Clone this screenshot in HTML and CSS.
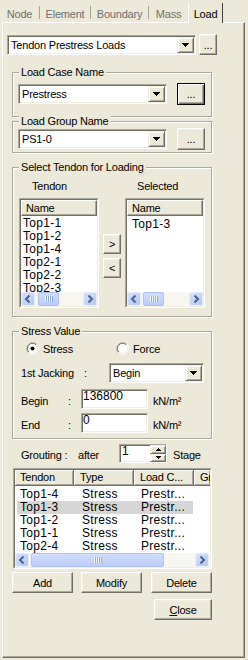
FILE: index.html
```html
<!DOCTYPE html>
<html>
<head>
<meta charset="utf-8">
<link rel="stylesheet" href="styles.css">
</head>
<body>
<div class="tabs">
  <span class="tab tab-node">Node</span><span class="tsep"></span>
  <span class="tab tab-elem">Element</span><span class="tsep"></span>
  <span class="tab tab-bnd">Boundary</span><span class="tsep"></span>
  <span class="tab tab-mass">Mass</span>
  <span class="tab tab-load">Load</span>
</div>
<div class="panel">
  <div class="row-type">
    <div class="combo combo-type"><span class="ctext">Tendon Prestress Loads</span><span class="drop"><svg width="7" height="4" viewBox="0 0 7 4"><path d="M0 0h7v1H0zM1 1h5v1H1zM2 2h3v1H2zM3 3h1v1H3z"/></svg></span></div>
    <button class="btn btn-dots-s">...</button>
  </div>

  <div class="group g-case">
    <div class="gtitle">Load Case Name</div>
    <div class="grow">
      <div class="combo combo-name"><span class="ctext">Prestress</span><span class="drop"><svg width="7" height="4" viewBox="0 0 7 4"><path d="M0 0h7v1H0zM1 1h5v1H1zM2 2h3v1H2zM3 3h1v1H3z"/></svg></span></div>
      <button class="btn btn-def btn-dots">...</button>
    </div>
  </div>

  <div class="group g-group">
    <div class="gtitle">Load Group Name</div>
    <div class="grow">
      <div class="combo combo-name"><span class="ctext">PS1-0</span><span class="drop"><svg width="7" height="4" viewBox="0 0 7 4"><path d="M0 0h7v1H0zM1 1h5v1H1zM2 2h3v1H2zM3 3h1v1H3z"/></svg></span></div>
      <button class="btn btn-dots">...</button>
    </div>
  </div>

  <div class="group g-tendon">
    <div class="gtitle">Select Tendon for Loading</div>
    <div class="lblrow"><span class="lbl-t">Tendon</span><span>Selected</span></div>
    <div class="lists">
      <div class="lb">
        <div class="lb-in">
          <div class="lh">Name</div>
          <div class="litems">
            <div>Top1-1</div><div>Top1-2</div><div>Top1-4</div><div>Top2-1</div><div>Top2-2</div><div>Top2-3</div>
          </div>
          <div class="hsb">
            <span class="sbb"><svg width="12" height="12" viewBox="0 0 12 12"><path d="M7.5 2.5L4 6l3.5 3.5" fill="none" stroke="#4D6185" stroke-width="2"/></svg></span>
            <span class="thumb th-l"><span class="grip"></span></span>
            <span class="sbb r"><svg width="12" height="12" viewBox="0 0 12 12"><path d="M4.5 2.5L8 6l-3.5 3.5" fill="none" stroke="#4D6185" stroke-width="2"/></svg></span>
          </div>
        </div>
      </div>
      <div class="lmid">
        <button class="btn arrbtn first">&gt;</button>
        <button class="btn arrbtn">&lt;</button>
      </div>
      <div class="lb lb-sel">
        <div class="lb-in">
          <div class="lh">Name</div>
          <div class="litems">
            <div>Top1-3</div>
          </div>
          <div class="hsb">
            <span class="sbb"><svg width="12" height="12" viewBox="0 0 12 12"><path d="M7.5 2.5L4 6l3.5 3.5" fill="none" stroke="#4D6185" stroke-width="2"/></svg></span>
            <span class="thumb th-r"><span class="grip"></span></span>
            <span class="sbb r"><svg width="12" height="12" viewBox="0 0 12 12"><path d="M4.5 2.5L8 6l-3.5 3.5" fill="none" stroke="#4D6185" stroke-width="2"/></svg></span>
          </div>
        </div>
      </div>
    </div>
  </div>

  <div class="group g-stress">
    <div class="gtitle">Stress Value</div>
    <div class="radios">
      <span class="ropt ropt1">
        <svg width="13" height="13" viewBox="0 0 13 13"><path d="M2.26 10.74A6 6 0 0 1 10.74 2.26" fill="none" stroke="#ACA899"/><path d="M10.74 2.26A6 6 0 0 1 2.26 10.74" fill="none" stroke="#fff"/><path d="M2.96 10.04A5 5 0 0 1 10.04 2.96" fill="none" stroke="#716F64"/><path d="M10.04 2.96A5 5 0 0 1 2.96 10.04" fill="none" stroke="#F1EFE2"/><circle cx="6.5" cy="6.5" r="4.5" fill="#fff"/><circle cx="6.5" cy="6.5" r="2" fill="#000"/></svg>
        <span>Stress</span>
      </span>
      <span class="ropt">
        <svg width="13" height="13" viewBox="0 0 13 13"><path d="M2.26 10.74A6 6 0 0 1 10.74 2.26" fill="none" stroke="#ACA899"/><path d="M10.74 2.26A6 6 0 0 1 2.26 10.74" fill="none" stroke="#fff"/><path d="M2.96 10.04A5 5 0 0 1 10.04 2.96" fill="none" stroke="#716F64"/><path d="M10.04 2.96A5 5 0 0 1 2.96 10.04" fill="none" stroke="#F1EFE2"/><circle cx="6.5" cy="6.5" r="4.5" fill="#fff"/></svg>
        <span>Force</span>
      </span>
    </div>
    <div class="frow frow-jack">
      <span class="flbl lbl-jack">1st Jacking</span><span class="flbl colon-j">:</span>
      <div class="combo combo-jack"><span class="ctext">Begin</span><span class="drop"><svg width="7" height="4" viewBox="0 0 7 4"><path d="M0 0h7v1H0zM1 1h5v1H1zM2 2h3v1H2zM3 3h1v1H3z"/></svg></span></div>
    </div>
    <div class="frow frow-begin">
      <span class="flbl lbl-val">Begin</span><span class="flbl colon-v">:</span>
      <div class="edit">136800</div>
      <span class="flbl unit">kN/m²</span>
    </div>
    <div class="frow frow-end">
      <span class="flbl lbl-val">End</span><span class="flbl colon-v">:</span>
      <div class="edit">0</div>
      <span class="flbl unit">kN/m²</span>
    </div>
  </div>

  <div class="grout">
    <span class="flbl g-lbl">Grouting :</span><span class="flbl g-after">after</span>
    <div class="spin">
      <span class="spin-val">1</span>
      <span class="spin-btns">
        <span class="sp"><svg width="5" height="3" viewBox="0 0 5 3"><path d="M2 0h1v1h1v1h1v1H0V2h1V1h1z"/></svg></span>
        <span class="sp"><svg width="5" height="3" viewBox="0 0 5 3"><path d="M0 0h5v1H4v1H3v1H2V2H1V1H0z"/></svg></span>
      </span>
    </div>
    <span class="flbl g-stage">Stage</span>
  </div>

  <div class="lv">
    <div class="lv-in">
      <div class="lvh">
        <span class="hc hc1">Tendon</span><span class="hc hc2">Type</span><span class="hc hc3">Load C...</span><span class="hc hc4">Gr</span>
      </div>
      <div class="lvrows">
        <div class="lvr"><span class="c1">Top1-4</span><span class="c2">Stress</span><span class="c3">Prestr...</span></div>
        <div class="lvr sel"><span class="c1">Top1-3</span><span class="c2">Stress</span><span class="c3">Prestr...</span></div>
        <div class="lvr"><span class="c1">Top1-2</span><span class="c2">Stress</span><span class="c3">Prestr...</span></div>
        <div class="lvr"><span class="c1">Top1-1</span><span class="c2">Stress</span><span class="c3">Prestr...</span></div>
        <div class="lvr"><span class="c1">Top2-4</span><span class="c2">Stress</span><span class="c3">Prestr...</span></div>
      </div>
      <div class="hsb">
        <span class="sbb"><svg width="12" height="12" viewBox="0 0 12 12"><path d="M7.5 2.5L4 6l3.5 3.5" fill="none" stroke="#4D6185" stroke-width="2"/></svg></span>
        <span class="thumb th-lv"><span class="grip"></span></span>
        <span class="sbb r rm"><svg width="12" height="12" viewBox="0 0 12 12"><path d="M4.5 2.5L8 6l-3.5 3.5" fill="none" stroke="#4D6185" stroke-width="2"/></svg></span>
      </div>
    </div>
  </div>

  <div class="brow">
    <button class="btn bw">Add</button>
    <button class="btn bw b-mod">Modify</button>
    <button class="btn bw b-del">Delete</button>
  </div>
  <div class="close-row">
    <button class="btn btn-close"><u>C</u>lose</button>
  </div>
</div>
</body>
</html>
```

FILE: styles.css
```css
* { box-sizing: border-box; }
html, body { margin: 0; padding: 0; }
body {
  width: 248px;
  height: 660px;
  overflow: hidden;
  background: #ECE9D8;
  font-family: "Liberation Sans", Arial, sans-serif;
  font-size: 11px;
  letter-spacing: -0.2px;
  color: #000;
}

/* tabs */
.tabs { display: flex; align-items: flex-start; height: 22px; }
.tab {
  height: 22px;
  padding-top: 8px;
  line-height: 13px;
  text-align: center;
  white-space: nowrap;
  color: #6f6f6f;
}
.tab-node { width: 39px; }
.tab-elem { width: 50px; }
.tab-bnd { width: 57px; }
.tab-mass { width: 39px; }
.tsep { width: 1px; height: 13px; margin-top: 6px; background: #A5A294; }
.tab-load {
  position: relative;
  z-index: 1;
  width: 35px;
  height: 20px;
  margin-top: 3px;
  padding-top: 5px;
  color: #000;
  background: #ECE9D8;
  border-left: 1px solid #fff;
  border-right: 1px solid #404040;
}

.panel {
  width: 243px;
  height: 636px;
  margin-left: 2px;
  border-top: 1px solid #fff;
  border-left: 1px solid #fff;
  border-right: 1px solid #716F64;
  border-bottom: 1px solid #716F64;
  box-shadow: inset -1px -1px #ACA899;
}

/* generic controls */
.combo {
  display: flex;
  height: 20px;
  background: #fff;
  border: 1px solid;
  border-color: #ACA899 #fff #fff #ACA899;
  box-shadow: inset 1px 1px #716F64, inset -1px -1px #F1EFE2;
}
.ctext {
  flex: 1;
  padding-left: 3px;
  line-height: 18px;
  white-space: nowrap;
  overflow: hidden;
}
.drop {
  flex: none;
  width: 17px;
  height: 16px;
  margin: 1px;
  display: flex;
  align-items: center;
  justify-content: center;
  background: #ECE9D8;
  border: 1px solid;
  border-color: #F1EFE2 #716F64 #716F64 #F1EFE2;
  box-shadow: inset 1px 1px #fff, inset -1px -1px #ACA899;
}
.btn {
  display: flex;
  align-items: center;
  justify-content: center;
  flex: none;
  margin: 0;
  padding: 0;
  font: inherit;
  letter-spacing: inherit;
  color: #000;
  background: #ECE9D8;
  border: 1px solid;
  border-color: #fff #716F64 #716F64 #fff;
  box-shadow: inset -1px -1px #ACA899, inset 1px 1px #F1EFE2;
}
.btn-def {
  border-color: #000;
  box-shadow: inset 1px 1px #fff, inset -1px -1px #716F64, inset -2px -2px #ACA899;
}
.edit {
  width: 67px;
  height: 20px;
  background: #fff;
  border: 1px solid;
  border-color: #ACA899 #fff #fff #ACA899;
  box-shadow: inset 1px 1px #716F64, inset -1px -1px #F1EFE2;
  padding-left: 1px;
  font-size: 12px;
  letter-spacing: 0;
  line-height: 13px;
}

/* first row */
.row-type { display: flex; align-items: flex-start; height: 21px; margin: 11px 0 0 4px; }
.combo-type { width: 189px; margin-top: 1px; }
.btn-dots-s { width: 18px; height: 21px; margin-left: 3px; }

/* group boxes */
.group {
  width: 200px;
  margin-left: 9px;
  border: 1px solid #ACA899;
  box-shadow: inset 1px 1px #fff, 1px 1px #fff;
}
.gtitle {
  width: max-content;
  height: 13px;
  margin: -7px 0 0 6px;
  padding: 0 2px;
  line-height: 13px;
  background: #ECE9D8;
}
.grow { display: flex; align-items: center; height: 22px; margin-left: 5px; }
.combo-name { width: 149px; }
.btn-dots { width: 28px; height: 22px; margin-left: 10px; }

.g-case { margin-top: 17px; padding-bottom: 11px; }
.g-case .grow { margin-top: 4px; }
.g-group { margin-top: 4px; padding-bottom: 2px; }
.g-tendon { margin-top: 14px; padding-bottom: 8px; }
.g-stress { margin-top: 14px; padding-bottom: 5px; }

/* tendon selection */
.lblrow { display: flex; height: 13px; line-height: 13px; margin: 6px 0 0 19px; }
.lbl-t { width: 105px; }
.lists { display: flex; align-items: flex-start; margin: 5px 0 0 6px; }
.lb {
  width: 80px;
  height: 110px;
  border: 1px solid;
  border-color: #ACA899 #fff #fff #ACA899;
}
.lb-in, .lv-in {
  height: 100%;
  display: flex;
  flex-direction: column;
  overflow: hidden;
  background: #fff;
  border: 1px solid;
  border-color: #716F64 #F1EFE2 #F1EFE2 #716F64;
}
.lh {
  flex: none;
  height: 16px;
  padding-left: 4px;
  line-height: 14px;
  background: #ECE9D8;
  border: 1px solid;
  border-color: #fff #716F64 #716F64 #fff;
  box-shadow: inset -1px -1px #ACA899;
}
.litems {
  flex: 1;
  margin-top: 1px;
  padding-left: 2px;
  overflow: hidden;
  font-size: 12px;
  letter-spacing: 0.3px;
  line-height: 13px;
  white-space: nowrap;
}
.lb-sel .litems { padding-left: 5px; margin-top: 2px; }
.lmid { display: flex; flex-direction: column; width: 18px; margin: 0 4px; }
.arrbtn { width: 18px; height: 20px; }
.arrbtn.first { margin-top: 36px; }
.arrbtn + .arrbtn { margin-top: 4px; }

/* scrollbars */
.hsb { flex: none; display: flex; height: 14px; background: #F7F6F1; }
.sbb {
  flex: none;
  width: 14px;
  height: 14px;
  display: flex;
  align-items: center;
  justify-content: center;
  border: 1px solid #E6EDFD;
  border-radius: 2px;
  background: linear-gradient(135deg, #D6E2FE, #B2C7F6);
}
.sbb.r { margin-left: auto; }
.sbb.rm { margin-right: 1px; }
.thumb {
  flex: none;
  height: 14px;
  display: flex;
  align-items: center;
  justify-content: center;
  border: 1px solid #AFC3F2;
  border-radius: 2px;
  background: linear-gradient(#D0DDFD, #BACCF8);
}
.grip {
  width: 8px;
  height: 6px;
  background: repeating-linear-gradient(90deg, #F2F6FF 0 1px, #8FA9E6 1px 2px);
}
.th-l { width: 21px; margin-left: 3px; }
.th-r { width: 21px; margin-left: 2px; }
.th-lv { width: 133px; margin-left: 2px; }

/* stress group */
.radios { display: flex; align-items: center; height: 13px; margin: 4px 0 0 13px; }
.ropt { display: flex; align-items: center; gap: 4px; }
.ropt svg { display: block; }
.ropt1 { width: 90px; }
.frow { display: flex; align-items: flex-start; height: 20px; margin-left: 8px; }
.flbl { line-height: 13px; white-space: nowrap; }
.frow-jack { margin-top: 8px; }
.frow-jack .flbl { margin-top: 4px; }
.lbl-jack { width: 63px; }
.colon-j { width: 25px; }
.combo-jack { width: 95px; }
.frow-begin { margin-top: 6px; }
.frow-end { margin-top: 4px; }
.frow-begin .flbl, .frow-end .flbl { margin-top: 6px; }
.lbl-val { width: 47px; }
.colon-v { width: 13px; }
.unit { margin-left: 5px; }

/* grouting */
.grout { display: flex; align-items: flex-start; height: 19px; margin: 5px 0 0 18px; }
.grout .flbl { margin-top: 5px; }
.g-lbl { width: 57px; }
.g-after { width: 41px; }
.g-stage { margin-left: 6px; }
.spin {
  display: flex;
  width: 48px;
  height: 19px;
  background: #fff;
  border: 1px solid;
  border-color: #ACA899 #fff #fff #ACA899;
  box-shadow: inset 1px 1px #716F64, inset -1px -1px #F1EFE2;
}
.spin-val {
  flex: 1;
  padding: 0 0 0 2px;
  font-size: 12px;
  letter-spacing: 0;
  line-height: 13px;
}
.spin-btns { display: flex; flex-direction: column; width: 16px; }
.sp {
  flex: 1;
  display: flex;
  align-items: center;
  justify-content: center;
  background: #ECE9D8;
  border: 1px solid;
  border-color: #F1EFE2 #716F64 #716F64 #F1EFE2;
  box-shadow: inset 1px 1px #fff, inset -1px -1px #ACA899;
}
.sp svg { display: block; }

/* list view */
.lv {
  width: 199px;
  height: 101px;
  margin: 5px 0 0 10px;
  border: 1px solid;
  border-color: #ACA899 #fff #fff #ACA899;
}
.lvh { flex: none; display: flex; height: 16px; }
.hc {
  flex: none;
  height: 16px;
  line-height: 14px;
  padding-left: 6px;
  white-space: nowrap;
  overflow: hidden;
  background: #ECE9D8;
  border-right: 1px solid #716F64;
  border-bottom: 1px solid #716F64;
  box-shadow: inset 1px 1px #fff, inset -1px -1px #ACA899;
}
.hc1 { width: 59px; padding-left: 5px; }
.hc2 { width: 60px; }
.hc3 { width: 60px; }
.hc4 { flex: 1; border-right: 0; }
.lvrows {
  flex: 1;
  margin-top: 2px;
  overflow: hidden;
  font-size: 12px;
  letter-spacing: 0.3px;
  line-height: 13px;
  white-space: nowrap;
}
.lvr { display: flex; width: 176px; height: 13px; margin-left: 2px; }
.lvr.sel { background: #D6D6D6; }
.c1 { width: 57px; padding-left: 3px; }
.c2 { width: 60px; padding-left: 8px; }
.c3 { width: 59px; padding-left: 7px; overflow: hidden; }

/* bottom buttons */
.brow { display: flex; margin: 3px 0 0 9px; }
.bw { width: 61px; height: 21px; }
.b-mod { margin-left: 8px; }
.b-del { margin-left: 9px; }
.close-row { display: flex; margin: 6px 0 0 151px; }
.btn-close { width: 58px; height: 21px; }
```
